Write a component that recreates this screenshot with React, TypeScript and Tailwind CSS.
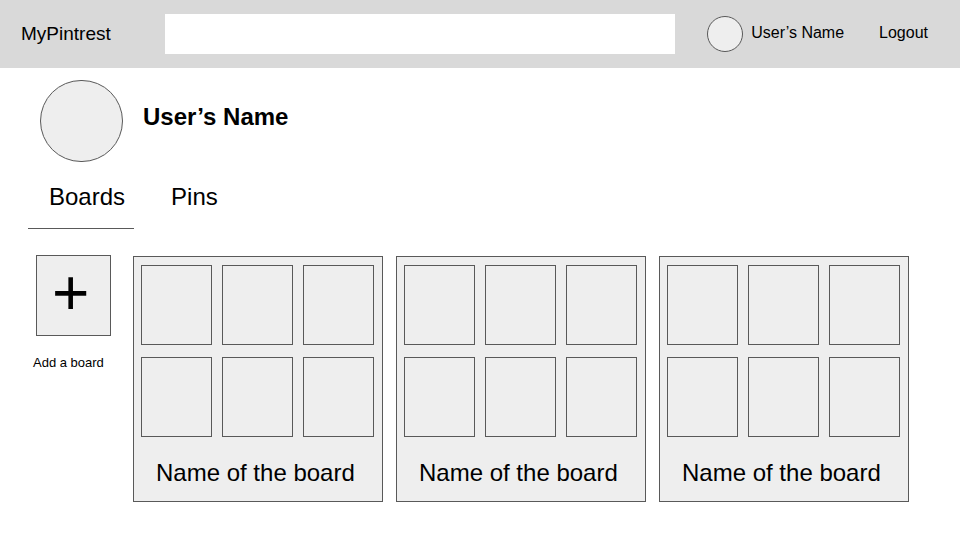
const boards = [
  { id: 1, name: "Name of the board", pins: 6 },
  { id: 2, name: "Name of the board", pins: 6 },
  { id: 3, name: "Name of the board", pins: 6 },
];

function Header() {
  return (
    <header className="flex h-[68px] items-center bg-[#d9d9d9] pr-8 pl-[21px]">
      <a href="#home" className="w-36 shrink-0 text-[19px] leading-6">
        MyPintrest
      </a>
      <input
        type="search"
        aria-label="Search"
        className="h-10 min-w-0 flex-1 bg-white px-3 text-base outline-none"
      />
      <div className="ml-8 flex shrink-0 items-center gap-2">
        <div className="size-9 rounded-full border border-[#595959] bg-[#eeeeee]" />
        <a href="#profile" className="pb-0.5 text-base leading-6">
          User’s Name
        </a>
      </div>
      <button type="button" className="ml-[35px] shrink-0 pb-0.5 text-base leading-6">
        Logout
      </button>
    </header>
  );
}

function Profile() {
  return (
    <section className="flex items-center gap-5 pl-3">
      <div className="h-[82px] w-[83px] shrink-0 rounded-full border border-[#595959] bg-[#eeeeee]" />
      <h1 className="pb-2 text-2xl leading-8 font-bold">User’s Name</h1>
    </section>
  );
}

function Tabs() {
  return (
    <nav className="mt-[19px] flex gap-[37px] text-2xl leading-8">
      <a href="#boards" aria-current="page" className="border-b border-[#595959] pr-[9px] pb-[15px] pl-[21px]">
        Boards
      </a>
      <a href="#pins" className="pb-4">
        Pins
      </a>
    </nav>
  );
}

function AddBoard() {
  return (
    <div className="w-[105px] shrink-0">
      <button
        type="button"
        aria-labelledby="add-board-label"
        className="ml-2 flex h-[81px] w-[75px] border border-[#595959] bg-[#eeeeee] pt-[5px] pl-[15px] text-[64px] leading-[64px]"
      >
        +
      </button>
      <p id="add-board-label" className="mt-[17px] pl-[5px] text-[13px] leading-5">
        Add a board
      </p>
    </div>
  );
}

function BoardCard({ name, pins }: { name: string; pins: number }) {
  return (
    <li className="border border-[#595959] bg-[#eeeeee] pt-2 pr-2 pb-3 pl-[7px]">
      <div className="grid grid-cols-3 gap-x-2.5 gap-y-3">
        {Array.from({ length: pins }, (_, i) => (
          <div key={i} className="h-20 border border-[#595959]" />
        ))}
      </div>
      <h2 className="mt-5 pl-[15px] text-2xl leading-8 whitespace-nowrap">{name}</h2>
    </li>
  );
}

export default function App() {
  return (
    <div className="min-h-screen bg-white font-['Liberation_Sans',Arial,sans-serif] text-black">
      <Header />
      <main className="pt-3 pr-[51px] pb-8 pl-7">
        <Profile />
        <Tabs />
        <section className="mt-[26px] flex items-start">
          <AddBoard />
          <ul className="grid flex-1 grid-cols-3 gap-[13px] pt-px">
            {boards.map((board) => (
              <BoardCard key={board.id} name={board.name} pins={board.pins} />
            ))}
          </ul>
        </section>
      </main>
    </div>
  );
}
